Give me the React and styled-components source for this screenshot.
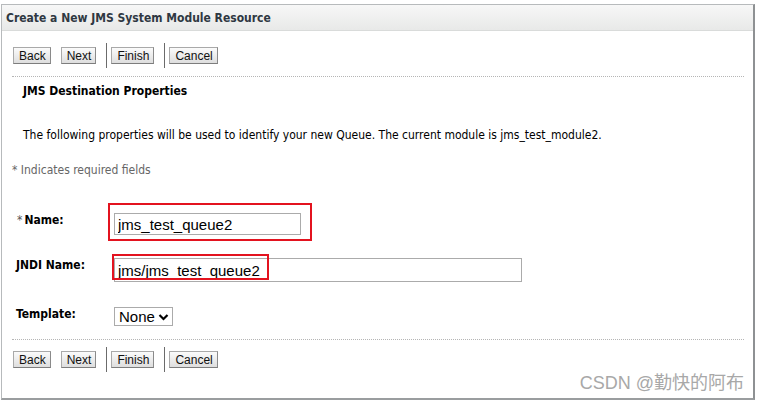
import React from "react";
import styled, { createGlobalStyle } from "styled-components";

const GlobalStyle = createGlobalStyle`
  html, body { margin: 0; padding: 0; background: #ffffff; }
  * { box-sizing: border-box; }
`;

const Page = styled.div`
  width: 760px;
  height: 403px;
  padding: 4px 5px 3px 1px;
`;

const Panel = styled.div`
  position: relative;
  height: 100%;
  border: 1px solid #b7babc;
  border-right: 2px solid #8e9193;
  border-bottom: 2px solid #9a9d9f;
  background: #ffffff;
`;

const Header = styled.div`
  height: 26px;
  display: flex;
  align-items: center;
  padding-left: 4px;
  background: linear-gradient(#f7f7f7, #e8e9e8);
  border-bottom: 1px solid #d9dbda;
`;

const Title = styled.div`
  font-family: "DejaVu Sans Condensed", "DejaVu Sans", sans-serif;
  font-weight: bold;
  font-size: 12px;
  color: #2f3842;
`;

const ButtonBar = styled.div`
  display: flex;
  align-items: center;
  height: 25px;
  margin: ${(p) => p.$top}px 0 0 11px;
`;

const Btn = styled.button`
  font-family: "Liberation Sans", Arial, sans-serif;
  font-size: 12px;
  color: #111;
  height: 17px;
  padding: 0 4px 0 5px;
  margin-right: ${(p) => p.$mr ?? 10}px;
  border: 1px solid #a9a9a9;
  border-bottom-color: #7d7d7d;
  border-right-color: #8a8a8a;
  background: linear-gradient(#fbfbfb, #dedede);
  line-height: 14px;
  cursor: pointer;
`;

const Sep = styled.span`
  width: 1px;
  height: 25px;
  background: #6b6b6b;
  margin-right: 4px;
`;

const Divider = styled.div`
  margin: ${(p) => p.$top}px 9px 0 10px;
  border-top: 1px dotted #b5b5b5;
`;

const Text = styled.div`
  font-family: "DejaVu Sans Condensed", "DejaVu Sans", sans-serif;
  font-size: 12px;
  line-height: 15px;
  color: ${(p) => p.$color || "#000"};
  font-weight: ${(p) => (p.$bold ? "bold" : "normal")};
  margin: ${(p) => p.$top}px 0 0 ${(p) => p.$left}px;
`;

const FieldRow = styled.div`
  display: flex;
  align-items: flex-start;
  margin-top: ${(p) => p.$top}px;
`;

const Label = styled.div`
  width: 112px;
  padding-left: ${(p) => p.$left}px;
  padding-top: ${(p) => p.$pt}px;
  font-family: "DejaVu Sans Condensed", "DejaVu Sans", sans-serif;
  font-size: 12px;
  font-weight: bold;
  color: #000;
`;

const Star = styled.span`
  font-weight: normal;
  color: #555;
  margin-right: 2px;
`;

const FieldWrap = styled.div`
  position: relative;
`;

const Input = styled.input`
  display: block;
  width: ${(p) => p.$w}px;
  height: ${(p) => p.$h}px;
  border: 1px solid #ababab;
  padding: 0 0 0 3px;
  font-family: "Liberation Sans", Arial, sans-serif;
  font-size: 15px;
  color: #000;
  background: #fff;
  outline: none;
`;

const Highlight = styled.div`
  position: absolute;
  left: ${(p) => p.$l}px;
  top: ${(p) => p.$t}px;
  width: ${(p) => p.$w}px;
  height: ${(p) => p.$h}px;
  border: 2px solid #e3131f;
  pointer-events: none;
`;

const SelectBox = styled.div`
  display: flex;
  align-items: center;
  gap: 3px;
  width: 59px;
  height: 19px;
  border: 1px solid #ababab;
  padding-left: 4px;
  font-family: "Liberation Sans", Arial, sans-serif;
  font-size: 15px;
  color: #000;
  background: #fff;
`;

const Watermark = styled.div`
  position: absolute;
  right: 9px;
  bottom: 5px;
  font-family: "Liberation Sans", "Noto Sans CJK SC", sans-serif;
  font-size: 18px;
  line-height: 20px;
  color: #a8a8a8;
`;

function Buttons({ top }) {
  return (
    <ButtonBar $top={top}>
      <Btn>Back</Btn>
      <Btn>Next</Btn>
      <Sep />
      <Btn>Finish</Btn>
      <Sep />
      <Btn>Cancel</Btn>
    </ButtonBar>
  );
}

export default function App() {
  return (
    <>
      <GlobalStyle />
      <Page>
        <Panel>
          <Header>
            <Title>Create a New JMS System Module Resource</Title>
          </Header>
          <Buttons top={12} />
          <Divider $top={8} />
          <Text $bold $top={7} $left={21}>JMS Destination Properties</Text>
          <Text $top={29} $left={21}>
            The following properties will be used to identify your new Queue. The current module is jms_test_module2.
          </Text>
          <Text $top={20} $left={10} $color="#666">* Indicates required fields</Text>

          <FieldRow $top={35}>
            <Label $left={15} $pt={0}>
              <Star>*</Star>Name:
            </Label>
            <FieldWrap>
              <Input $w={187} $h={22} defaultValue="jms_test_queue2" />
              <Highlight $l={-6} $t={-10} $w={204} $h={38} />
            </FieldWrap>
          </FieldRow>

          <FieldRow $top={23}>
            <Label $left={14} $pt={0}>JNDI Name:</Label>
            <FieldWrap>
              <Input $w={408} $h={24} defaultValue="jms/jms_test_queue2" />
              <Highlight $l={-2} $t={-4} $w={157} $h={26} />
            </FieldWrap>
          </FieldRow>

          <FieldRow $top={25}>
            <Label $left={14} $pt={0}>Template:</Label>
            <SelectBox>
              None
              <svg width="11" height="8" viewBox="0 0 11 8">
                <path d="M1.5 2 L5.5 6 L9.5 2" fill="none" stroke="#000" strokeWidth="2.2" />
              </svg>
            </SelectBox>
          </FieldRow>

          <Divider $top={13} />
          <Buttons top={7} />

          <Watermark>CSDN @勤快的阿布</Watermark>
        </Panel>
      </Page>
    </>
  );
}
